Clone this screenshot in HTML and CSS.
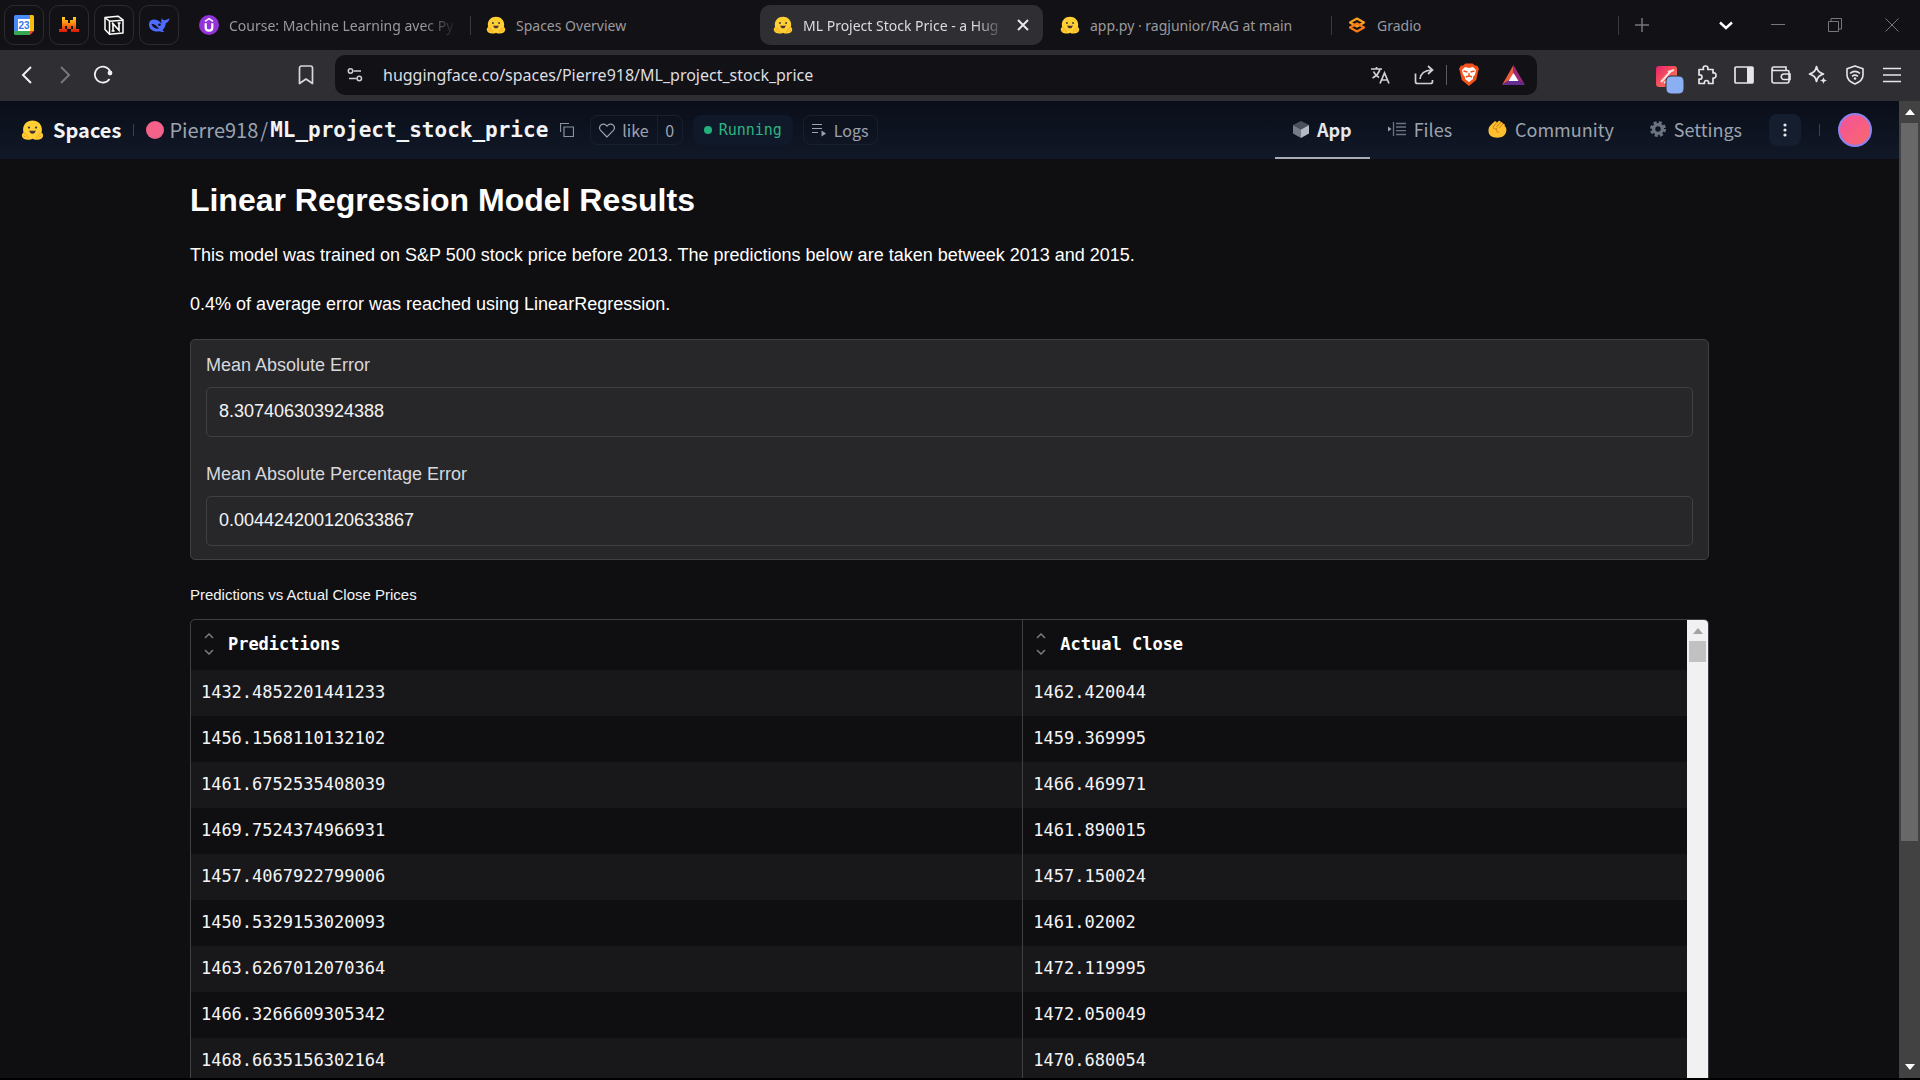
FILE: index.html
```html
<!DOCTYPE html>
<html lang="en">
<head>
<meta charset="utf-8">
<title>ML Project Stock Price - a Hugging Face Space</title>
<link rel="stylesheet" href="styles.css">
</head>
<body>
<svg class="defs" aria-hidden="true">
  <defs>
    <linearGradient id="batLeft" x1="0" y1="1" x2="1" y2="0"><stop offset="0" stop-color="#e8562f"/><stop offset="1" stop-color="#f0604a"/></linearGradient>
    <linearGradient id="mistralFill" x1="0" y1="0" x2="0" y2="1"><stop offset="0" stop-color="#ffd21e"/><stop offset="0.5" stop-color="#fa7a10"/><stop offset="1" stop-color="#d81405"/></linearGradient>
    <linearGradient id="extFill" x1="0" y1="0" x2="1" y2="1"><stop offset="0" stop-color="#e8206c"/><stop offset="1" stop-color="#ff8a4a"/></linearGradient>
  </defs>
  <symbol id="hug" viewBox="0 0 24 22">
    <path d="M12 1C6.300 1 2.200 5 2.200 10.400c0 1.200.1 2.200.4 3.100C1 14.600.6 16.400 1.200 18c.6 2 3 3 6 3.200 2 .2 3.500-.1 4.800-1 1.300.9 2.800 1.200 4.800 1 3-.2 5.400-1.200 6-3.200.6-1.600.2-3.400-1.400-4.500.3-.9.4-1.900.4-3.100C21.800 5 17.700 1 12 1z" fill="#ffcf33"/>
    <path d="M3 14.200c2 1 4.200 2.500 5 5.600M21 14.200c-2 1-4.200 2.500-5 5.600M2.500 17l2.800 1.500M21.500 17l-2.800 1.500" fill="none" stroke="#f0a11e" stroke-width="1"/>
    <circle cx="8.300" cy="8.500" r="1.200" fill="#3a3b45"/><circle cx="15.700" cy="8.500" r="1.200" fill="#3a3b45"/>
    <path d="M8.800 11.200c1 .8 5.400.8 6.400 0 0 2.500-1.300 3.700-3.200 3.700s-3.200-1.200-3.200-3.700z" fill="#4a3238"/>
  </symbol>
</svg>

<header class="tabstrip">
  <div class="pinned">
    <button class="pin" aria-label="Google Calendar">
      <svg width="20" height="20" viewBox="0 0 20 20"><path d="M0 1.500A1.500 1.500 0 0 1 1.500 0H16v4H4v12H0z" fill="#4a8af4"/><path d="M16 0h2.500A1.500 1.500 0 0 1 20 1.500V16h-4z" fill="#fbbc04"/><path d="M0 16h16v4H1.500A1.500 1.500 0 0 1 0 18.500z" fill="#34a853"/><path d="M16 16h4l-4 4z" fill="#ea4335"/><path d="M4 4h12v12H4z" fill="#fff"/><text x="10" y="14" text-anchor="middle" class="calendar-day">23</text></svg>
    </button>
    <button class="pin" aria-label="Mistral">
      <svg width="20" height="16" viewBox="0 0 20 16"><path d="M3 0h3v3h3v3h2V3h3V0h3v12h3v3h-8v-3h2V9h-2v3H8V9H6v3h2v3H0v-3h3z" fill="url(#mistralFill)"/></svg>
    </button>
    <button class="pin" aria-label="Notion">
      <svg width="20" height="20" viewBox="0 0 20 20"><path d="M1 2.500 14 1.200l5 3.600V18L5.500 19.200 1 14.500z" fill="#111" stroke="#fff" stroke-width="1.500" stroke-linejoin="round"/><path d="M1.500 3 5.500 6.200V19M5.500 6.200 19 5.200" fill="none" stroke="#fff" stroke-width="1.500"/><path d="M9 16V8.700l6 6.600V8M7.800 8.500h2M7.600 16h3M13.600 8h3" fill="none" stroke="#fff" stroke-width="1.600"/></svg>
    </button>
    <button class="pin" aria-label="DeepSeek">
      <svg width="22" height="18" viewBox="0 0 22 18"><path d="M1 7.500C1.500 4 5 2.500 9 4c2 .8 3 2.300 4.600 3.600C13 5.500 13.200 3.800 14 2c.3 1.600 1.200 2.200 2.500 2.300C18 4.200 19.800 3.300 21.500 2.300c-.2 2.400-1.500 4.200-3.700 4.900-.2 3-1.400 5.300-3.400 6.900l1.800 1.700c-1.800.4-3.200.2-4.400-.5C6.500 16.600.3 13.800 1 7.500z" fill="#4d6bfe"/><path d="M3.500 8c2.500-.6 4.800 1.200 7.500 4.700-3.800.2-6.700-1.400-7.500-4.700z" fill="#121115"/><circle cx="11.500" cy="8.700" r="1.300" fill="#121115"/></svg>
    </button>
  </div>
  <nav class="tabs" aria-label="Tabs">
    <button class="tab divided">
      <svg class="favicon" viewBox="0 0 20 20"><circle cx="10" cy="10" r="10" fill="#9433d8"/><path d="M6.700 8.200v4.300c0 2 1.300 3.200 3.300 3.200s3.300-1.200 3.300-3.200V8.200" fill="none" stroke="#fff" stroke-width="2.200"/><path d="m6 6.300 4-2.600 4 2.600" fill="none" stroke="#fff" stroke-width="1.600"/></svg>
      <span class="tab-title fade">Course: Machine Learning avec Py</span>
    </button>
    <button class="tab">
      <svg class="favicon"><use href="#hug"/></svg>
      <span class="tab-title">Spaces Overview</span>
    </button>
    <button class="tab active">
      <svg class="favicon"><use href="#hug"/></svg>
      <span class="tab-title fade">ML Project Stock Price - a Hug</span>
      <svg class="tab-close" width="12" height="12" viewBox="0 0 12 12"><path d="m1 1 10 10M11 1 1 11" stroke="#e8e8ea" stroke-width="2"/></svg>
    </button>
    <button class="tab divided">
      <svg class="favicon"><use href="#hug"/></svg>
      <span class="tab-title">app.py · ragjunior/RAG at main</span>
    </button>
    <button class="tab divided">
      <svg class="favicon" viewBox="0 0 20 20"><path d="m10 3.500 7 4-7 4-7-4z" fill="none" stroke="#f7a021" stroke-width="2.200" stroke-linejoin="round"/><path d="m10 8.500 7 4-7 4-7-4z" fill="none" stroke="#f97a16" stroke-width="2.200" stroke-linejoin="round"/></svg>
      <span class="tab-title">Gradio</span>
    </button>
    <button class="new-tab" aria-label="New tab"><svg width="14" height="14" viewBox="0 0 14 14"><path d="M7 0v14M0 7h14" stroke="#77777b" stroke-width="1.500"/></svg></button>
  </nav>
  <div class="window-controls">
    <button class="tab-search" aria-label="Search tabs"><svg width="14" height="14" viewBox="0 0 14 14"><path d="m1 4.500 6 5.500 6-5.500" fill="none" stroke="#fff" stroke-width="2.400"/></svg></button>
    <button aria-label="Minimize"><svg width="14" height="14" viewBox="0 0 14 14"><path d="M0 6.500h14" stroke="#77777b"/></svg></button>
    <button aria-label="Restore"><svg width="14" height="14" viewBox="0 0 14 14"><path d="M.5 3.500h10v10H.5zM3 3.500V.5h10.500V11h-3" fill="none" stroke="#77777b"/></svg></button>
    <button aria-label="Close"><svg width="14" height="14" viewBox="0 0 14 14"><path d="m.5.5 13 13M13.500.5l-13 13" stroke="#77777b"/></svg></button>
  </div>
</header>

<div class="toolbar">
  <div class="nav-buttons">
    <button aria-label="Back"><svg width="18" height="18" viewBox="0 0 18 18"><path d="M13 1 5 9l8 8" fill="none" stroke="#f0f0f2" stroke-width="2"/></svg></button>
    <button aria-label="Forward"><svg width="18" height="18" viewBox="0 0 18 18"><path d="m5 1 8 8-8 8" fill="none" stroke="#77777b" stroke-width="2"/></svg></button>
    <button aria-label="Reload"><svg width="20" height="20" viewBox="0 0 20 20"><path d="M16.500 14A8 8 0 1 1 17 6" fill="none" stroke="#f0f0f2" stroke-width="1.800"/><circle cx="17" cy="8" r="2.400" fill="#f0f0f2"/></svg></button>
  </div>
  <button class="bookmark" aria-label="Bookmark"><svg width="16" height="20" viewBox="0 0 16 20"><path d="M1.500 3a2 2 0 0 1 2-2h9a2 2 0 0 1 2 2v15.500L8 14l-6.500 4.500z" fill="none" stroke="#d8d8dc" stroke-width="1.700" stroke-linejoin="round"/></svg></button>
  <div class="address">
    <svg width="16" height="16" viewBox="0 0 16 16"><g fill="none" stroke="#d0d0d4" stroke-width="1.500"><circle cx="3.500" cy="4" r="2.200"/><path d="M6.500 4H14M2 11.500h7.500"/><circle cx="12.300" cy="11.500" r="2.200"/></g></svg>
    <input type="text" class="url" aria-label="Address" value="huggingface.co/spaces/Pierre918/ML_project_stock_price">
    <div class="address-icons">
      <button aria-label="Translate"><svg width="20" height="20" viewBox="0 0 20 20"><path d="M1 4h11M6.500 2v2M2.500 13c4-2 6.500-5 7.500-9M3.500 6.500c1 2.500 3 4.500 5.500 6M10 18.500 14.500 8 19 18.500M11.600 15h5.800" fill="none" stroke="#d0d0d4" stroke-width="1.700"/></svg></button>
      <button aria-label="Share"><svg width="20" height="20" viewBox="0 0 20 20"><path d="M1.500 8.500v8a2 2 0 0 0 2 2h13a2 2 0 0 0 2-2V15M6 14c.5-5 3.500-8.500 12-9M14 1l4.500 4-4.500 4" fill="none" stroke="#d0d0d4" stroke-width="1.700"/></svg></button>
      <span class="address-rule"></span>
      <button aria-label="Brave Shields"><svg width="20" height="23" viewBox="0 0 20 23"><path d="m4 2.500 2.500-2h7l2.500 2 2.300.3L20 6l-.8 2-2 9L10 23l-7.200-6-2-9L0 6l1.700-3.200z" fill="#f1531d"/><path d="M10 5 6 4 3 7l1 4.500L6 14v2l4 3 4-3v-2l2-2.500L17 7l-3-3z" fill="#fff"/><path d="m4.500 8 4 1M15.500 8l-4 1M10 10v4M7 14l3-1.500 3 1.500" fill="none" stroke="#f1531d" stroke-width="1.400"/></svg></button>
      <button aria-label="Brave Rewards"><svg width="23" height="20" viewBox="0 0 23 20"><path d="M11.500 0 0 20l11.500-8z" fill="url(#batLeft)"/><path d="M11.500 0 23 20l-11.500-8z" fill="#9a2a78"/><path d="M0 20h23l-11.500-8z" fill="#662d91"/><path d="m11.500 8 5 8h-10z" fill="#fff"/></svg></button>
    </div>
  </div>
  <div class="extensions">
    <button class="ext" aria-label="Extension"><svg width="28" height="28" viewBox="0 0 28 28"><rect width="21" height="21" rx="3" fill="url(#extFill)"/><path d="m5 16 10-11M8 17l5-4M12 6l6-2" stroke="#ffe0e4" stroke-width="2"/><rect x="10" y="10" width="18" height="18" rx="5" fill="#8ab0f3" stroke="#2f2e33"/></svg></button>
    <button aria-label="Extensions"><svg width="20" height="20" viewBox="0 0 20 20"><path d="M2 4.500h4.500C5.500 1.800 7 1 8.500 1S11.500 1.800 10.800 4.500H16V8c2.500-.5 3 1 3 2.500S18 13.500 16 13v5.500h-4.500c.5-2.200-.5-3-2-3s-2.500.8-2 3H2V14c2.200.5 3-.5 3-2S4 9.500 2 10z" fill="none" stroke="#e6e6e8" stroke-width="1.700" stroke-linejoin="round"/></svg></button>
    <button aria-label="Side panel"><svg width="20" height="20" viewBox="0 0 20 20"><rect x="1" y="2" width="18" height="16" rx="1" fill="none" stroke="#e6e6e8" stroke-width="1.700"/><path d="M13 2h6v16h-6z" fill="#e6e6e8"/></svg></button>
    <button aria-label="Wallet"><svg width="20" height="20" viewBox="0 0 20 20"><path d="M1 3.500V16a2 2 0 0 0 2 2h13a2 2 0 0 0 2-2V7a1.500 1.500 0 0 0-1.500-1.500H3A2 2 0 0 1 1 3.500 1.700 1.700 0 0 1 2.700 2H15v3.500M19 9h-6a2.700 2.700 0 0 0 0 5.500h6z" fill="none" stroke="#e6e6e8" stroke-width="1.600"/></svg></button>
    <button aria-label="Leo AI"><svg width="20" height="20" viewBox="0 0 20 20"><path d="M8.500 1.500C9.500 6 11 7.500 15.500 9 11 10.500 9.500 12 8.500 16.500 7.500 12 6 10.500 1.500 9 6 7.500 7.500 6 8.500 1.500z" fill="none" stroke="#e6e6e8" stroke-width="1.700" stroke-linejoin="round"/><path d="M15.500 12c.5 2.300 1.200 3 3.500 3.500-2.300.5-3 1.200-3.500 3.500-.5-2.300-1.200-3-3.500-3.500 2.300-.5 3-1.200 3.500-3.500z" fill="#e6e6e8"/></svg></button>
    <button aria-label="VPN"><svg width="20" height="20" viewBox="0 0 20 20"><path d="M10 1 2 3.800V10c0 4 3 7 8 9 5-2 8-5 8-9V3.800z" fill="none" stroke="#e6e6e8" stroke-width="1.600" stroke-linejoin="round"/><path d="M5 8.500c3-2.600 7-2.600 10 0M7 11.300c2-1.500 4-1.500 6 0" fill="none" stroke="#e6e6e8" stroke-width="1.600"/><circle cx="10" cy="13.500" r="1.300" fill="#e6e6e8"/></svg></button>
    <button aria-label="Menu"><svg width="20" height="20" viewBox="0 0 20 20"><path d="M1 3.500h18M1 10h18M1 16.500h18" stroke="#e6e6e8" stroke-width="1.700"/></svg></button>
  </div>
</div>

<div class="viewport">
  <div class="page">
    <header class="space-header">
      <a class="brand" href="#"><svg width="23" height="22"><use href="#hug"/></svg>Spaces</a>
      <span class="rule"></span>
      <span class="owner-dot"></span>
      <a class="owner" href="#">Pierre918</a>
      <span class="slash">/</span>
      <a class="repo" href="#">ML_project_stock_price</a>
      <button class="copy" aria-label="Copy name"><svg width="14" height="14" viewBox="0 0 14 14"><path d="M4 4h9.500v9.500H4zM.500 9V.500H9" fill="none" stroke="#8b93a1" stroke-width="1.200"/></svg></button>
      <div class="like-box">
        <button class="like"><svg width="16" height="15" viewBox="0 0 16 15"><path d="M8 14 1.800 7.600a3.900 3.900 0 0 1 0-5.400 3.600 3.600 0 0 1 5.200 0l1 1 1-1a3.600 3.600 0 0 1 5.200 0 3.900 3.900 0 0 1 0 5.400z" fill="none" stroke="#9ca3af" stroke-width="1.200"/></svg>like</button>
        <button class="like-count">0</button>
      </div>
      <span class="status"><span class="status-dot"></span>Running</span>
      <button class="logs"><svg width="14" height="14" viewBox="0 0 14 14"><path d="M0 1.500h10M0 5.500h10M0 9.500h6" stroke="#9ca3af" stroke-width="1.200"/><path d="m9.500 7.500 4.500 3-4.500 3z" fill="#9ca3af"/></svg>Logs</button>
      <nav class="space-nav">
        <a class="current" href="#"><svg width="16" height="17" viewBox="0 0 16 17"><path d="m8 0 8 4-8 4.500L0 4z" fill="#4b515c"/><path d="m0 4 8 4.500V17l-8-4.500z" fill="#767c88"/><path d="m16 4-8 4.500V17l8-4.500z" fill="#b4b9c3"/></svg>App</a>
        <a href="#"><svg width="18" height="14" viewBox="0 0 18 14"><path d="M5.500 0v14M8 1.500h10M8 5h10M8 8.700h10M8 12.500h10" stroke="#6b7280" stroke-width="1.300"/><path d="m0 4.500 3.500 2.500L0 9.500z" fill="#9ca3af"/></svg>Files</a>
        <a href="#"><svg width="19" height="18" viewBox="0 0 19 18"><path d="M.5 11c0-2.500.3-4 1.700-5.300C3.500 4.400 5 3 6.500 1.600c1.200-1 2.700.1 2 1.400L10.500 1.200c1.200-1 2.600.2 2 1.500 1.200-.9 2.500-.1 2.300 1.300 1.400-.6 2.400.5 1.900 1.900 1.500 1.300 1.900 3 1.600 5.100-.6 4.300-3.800 6.700-9 6.700C4 17.700.5 15.500.5 11z" fill="#fdbf2d"/><path d="M8.500 3 5.500 6.500M12.500 2.700 8.500 7M14.800 4l-3.600 4M5.500 6.500C4.500 8 6 9.500 8.500 8.500c-.5 2 .5 3.500 2.500 4" fill="none" stroke="#d9881b" stroke-width="1.100"/></svg>Community</a>
        <a href="#"><svg width="16" height="16" viewBox="0 0 16 16"><circle cx="8" cy="8" r="6.500" fill="none" stroke="#6b7280" stroke-width="3" stroke-dasharray="3 2.100"/><circle cx="8" cy="8" r="4.400" fill="none" stroke="#6b7280" stroke-width="3.400"/></svg>Settings</a>
      </nav>
      <button class="more" aria-label="More"><svg width="4" height="14" viewBox="0 0 4 14"><circle cx="2" cy="2" r="1.600" fill="#e5e7eb"/><circle cx="2" cy="7" r="1.600" fill="#e5e7eb"/><circle cx="2" cy="12" r="1.600" fill="#e5e7eb"/></svg></button>
      <span class="rule"></span>
      <button class="avatar" aria-label="Account"></button>
    </header>

    <main class="app">
      <h1>Linear Regression Model Results</h1>
      <p>This model was trained on S&amp;P 500 stock price before 2013. The predictions below are taken betweek 2013 and 2015.</p>
      <p>0.4% of average error was reached using LinearRegression.</p>

      <section class="metrics">
        <label for="mae">Mean Absolute Error</label>
        <input id="mae" type="text" value="8.307406303924388" readonly>
        <label for="mape">Mean Absolute Percentage Error</label>
        <input id="mape" type="text" value="0.004424200120633867" readonly>
      </section>

      <section class="results">
        <h2 id="caption">Predictions vs Actual Close Prices</h2>
        <div class="table-frame">
          <table aria-labelledby="caption">
            <colgroup><col class="col-predictions"><col></colgroup>
            <thead>
              <tr>
                <th><div class="head"><svg width="10" height="22" viewBox="0 0 10 22"><path d="m1 5 4-4 4 4M1 17l4 4 4-4" fill="none" stroke="#7a7a80" stroke-width="1.500"/></svg>Predictions</div></th>
                <th><div class="head"><svg width="10" height="22" viewBox="0 0 10 22"><path d="m1 5 4-4 4 4M1 17l4 4 4-4" fill="none" stroke="#7a7a80" stroke-width="1.500"/></svg>Actual Close</div></th>
              </tr>
            </thead>
            <tbody>
              <tr><td>1432.4852201441233</td><td>1462.420044</td></tr>
              <tr><td>1456.1568110132102</td><td>1459.369995</td></tr>
              <tr><td>1461.6752535408039</td><td>1466.469971</td></tr>
              <tr><td>1469.7524374966931</td><td>1461.890015</td></tr>
              <tr><td>1457.4067922799006</td><td>1457.150024</td></tr>
              <tr><td>1450.5329153020093</td><td>1461.02002</td></tr>
              <tr><td>1463.6267012070364</td><td>1472.119995</td></tr>
              <tr><td>1466.3266609305342</td><td>1472.050049</td></tr>
              <tr><td>1468.6635156302164</td><td>1470.680054</td></tr>
            </tbody>
          </table>
          <div class="scrollbar light">
            <svg width="10" height="6" viewBox="0 0 10 6"><path d="M0 6 5 0l5 6z" fill="#a3a3a3"/></svg>
            <div class="thumb"></div>
          </div>
        </div>
      </section>
    </main>
  </div>
  <div class="scrollbar dark">
    <svg width="10" height="6" viewBox="0 0 10 6"><path d="M0 6 5 0l5 6z" fill="#fff"/></svg>
    <div class="track"><div class="thumb"></div></div>
    <svg width="10" height="6" viewBox="0 0 10 6"><path d="m0 0 5 6 5-6z" fill="#fff"/></svg>
  </div>
</div>
</body>
</html>
```

FILE: styles.css
```css
* { box-sizing: border-box; }

body {
  margin: 0;
  height: 100vh;
  overflow: hidden;
  display: flex;
  flex-direction: column;
  background: #000;
  color: #fff;
  font-family: "Liberation Sans", Arial, sans-serif;
}

button {
  display: flex;
  align-items: center;
  justify-content: center;
  margin: 0;
  padding: 0;
  border: 0;
  background: none;
  color: inherit;
  font: inherit;
  flex: none;
}

a { color: inherit; text-decoration: none; }
svg { display: block; flex: none; }
.defs { position: absolute; width: 0; height: 0; }

/* Browser tabs */
.tabstrip {
  flex: none;
  display: flex;
  align-items: center;
  height: 50px;
  padding-left: 4px;
  background: #121115;
  font-family: "Noto Sans", sans-serif;
  font-size: 14px;
  color: #9a9a9e;
}

.pinned { display: flex; gap: 5px; }
.pin {
  width: 40px;
  height: 40px;
  border: 1px solid #2e2b2e;
  border-radius: 10px;
}
.calendar-day { font: bold 10px "Liberation Sans", sans-serif; fill: #3b78e7; }

.tabs {
  flex: 1;
  min-width: 0;
  display: flex;
  align-items: center;
  margin-left: 5px;
}
.tab {
  flex: 0 1 283px;
  min-width: 0;
  height: 40px;
  margin: 0 2px;
  padding: 0 12px 0 13px;
  gap: 10px;
  justify-content: flex-start;
  border-radius: 10px;
  position: relative;
}
.tab.divided::after {
  content: "";
  position: absolute;
  right: -2px;
  top: 11px;
  width: 1px;
  height: 19px;
  background: #3a393e;
}
.tab.active { background: #2f2e33; color: #dcdce0; }
.favicon { width: 20px; height: 20px; }
.tab-title {
  flex: 1;
  min-width: 0;
  overflow: hidden;
  white-space: nowrap;
  text-align: left;
}
.fade { mask-image: linear-gradient(to right, #000 85%, transparent); }
.tab-close { margin: 0 2px; }
.new-tab { width: 46px; height: 40px; }

.window-controls { display: flex; }
.window-controls button { width: 57px; height: 40px; }
.window-controls .tab-search { width: 47px; }

/* Browser toolbar */
.toolbar {
  flex: none;
  display: flex;
  align-items: center;
  height: 51px;
  padding: 0 10px 2px 8px;
  background: #2f2e33;
}
.nav-buttons { display: flex; }
.nav-buttons button { width: 38px; height: 38px; }
.bookmark { width: 38px; height: 38px; margin-left: 165px; }
.address {
  flex: 1;
  min-width: 0;
  display: flex;
  align-items: center;
  height: 40px;
  margin: 0 114px 0 10px;
  padding: 0 2px 0 12px;
  border-radius: 10px;
  background: #121115;
}
.url {
  flex: 1;
  min-width: 0;
  margin: 0 0 0 20px;
  padding: 0;
  border: 0;
  outline: 0;
  background: none;
  color: #dedee2;
  font: 16px "Noto Sans", sans-serif;
}
.address-icons { display: flex; align-items: center; }
.address-icons button { width: 44px; height: 38px; }
.address-rule { width: 1px; height: 20px; background: #5a5a5f; }
.extensions { display: flex; align-items: center; }
.extensions button { width: 37px; height: 38px; }
.extensions .ext { align-items: flex-end; }

/* Page viewport */
.viewport {
  flex: 1;
  min-height: 0;
  display: flex;
  margin-bottom: 2px;
}
.page {
  flex: 1;
  min-width: 0;
  overflow: hidden;
  background: #0f0f11;
}

.scrollbar {
  flex: none;
  width: 21px;
  display: flex;
  flex-direction: column;
  align-items: center;
}
.dark { background: #424242; padding: 8px 0; gap: 8px; }
.dark .track { flex: 1; }
.dark .thumb { width: 17px; height: 77%; background: #686868; }
.light { background: #f1f1f2; padding-top: 8px; gap: 7px; border-top-right-radius: 4px; }
.light .thumb { width: 17px; height: 21px; background: #c1c1c1; }

/* Space header */
.space-header {
  display: flex;
  align-items: center;
  height: 58px;
  padding: 0 27px 0 21px;
  background: linear-gradient(#0a0e19, #111827);
  color: #9ca3af;
  font-family: "Noto Sans CJK SC", sans-serif;
  font-size: 20px;
  line-height: 24px;
}
.brand {
  display: flex;
  align-items: center;
  gap: 9px;
  color: #f3f4f6;
  font-weight: bold;
}
.rule { width: 1px; height: 12px; margin: 0 12px; background: #374151; }
.owner-dot {
  width: 18px;
  height: 18px;
  margin-right: 5px;
  border-radius: 50%;
  background: #f4628a;
}
.slash { margin: 0 2px; }
.repo {
  color: #f3f4f6;
  font: bold 21px "DejaVu Sans Mono", monospace;
}
.copy { margin: 0 16px 0 12px; }
.like-box, .logs {
  display: flex;
  height: 30px;
  border: 1px solid #182030;
  border-radius: 8px;
  font-size: 16px;
}
.like { padding: 0 8px; gap: 7px; }
.like-count { width: 25px; border-left: 1px solid #182030; }
.status {
  display: flex;
  align-items: center;
  gap: 7px;
  height: 30px;
  margin: 0 10px;
  padding: 0 11px;
  border-radius: 8px;
  background: #10192a;
  color: #2fb380;
  font: 15px "DejaVu Sans Mono", monospace;
}
.status-dot { width: 8px; height: 8px; border-radius: 50%; background: #22b07d; }
.logs { padding: 0 8px; gap: 8px; }
.space-nav { display: flex; align-self: stretch; margin: 0 9px 0 auto; font-size: 18px; }
.space-nav a {
  display: flex;
  align-items: center;
  gap: 8px;
  padding: 0 18px;
  border-bottom: 2px solid transparent;
}
.space-nav .current { color: #e5e7eb; font-weight: bold; border-color: #a9acb8; }
.more { width: 32px; height: 32px; border-radius: 8px; background: #151e2e; }
.more + .rule { margin: 0 18px; }
.avatar {
  width: 34px;
  height: 34px;
  border: 2px solid #8c83ee;
  border-radius: 50%;
  background: linear-gradient(135deg, #f4529a, #f9686c);
}

/* App */
.app { width: 80%; margin: 0 auto; padding-top: 21px; }
h1 { margin: 0 0 21px; font-size: 32px; line-height: 40px; }
p { margin: 0 0 20px; font-size: 18px; line-height: 29px; }

.metrics {
  display: flex;
  flex-direction: column;
  margin-bottom: 23px;
  padding: 13px 15px;
  border: 1px solid #3f3f46;
  border-radius: 5px;
  background: #27272a;
}
.metrics label {
  margin-bottom: 10px;
  font-size: 18px;
  line-height: 24px;
  color: #d8d8dc;
}
.metrics input {
  height: 50px;
  margin: 0;
  padding: 0 12px 2px;
  border: 1px solid #3f3f46;
  border-radius: 5px;
  background: #27272a;
  color: #f4f4f5;
  font: 18px "Liberation Sans", Arial, sans-serif;
}
.metrics input + label { margin-top: 25px; }

h2 { margin: 0 0 12px; font-size: 15px; font-weight: normal; line-height: 24px; color: #f4f4f5; }
.table-frame {
  display: flex;
  border: 1px solid #3f3f46;
  border-radius: 5px;
}
table {
  flex: 1;
  table-layout: fixed;
  border-collapse: collapse;
  font: 17px "DejaVu Sans Mono", monospace;
  color: #f4f4f5;
}
.col-predictions { width: 55.6%; }
th, td { padding: 0 10px 2px; text-align: left; }
th { height: 50px; color: #fff; }
td { height: 46px; }
th + th, td + td { border-left: 1px solid #3f3f46; }
tbody tr:nth-child(odd) { background: #18181b; }
.head { display: flex; align-items: center; gap: 14px; padding-left: 3px; }
```
